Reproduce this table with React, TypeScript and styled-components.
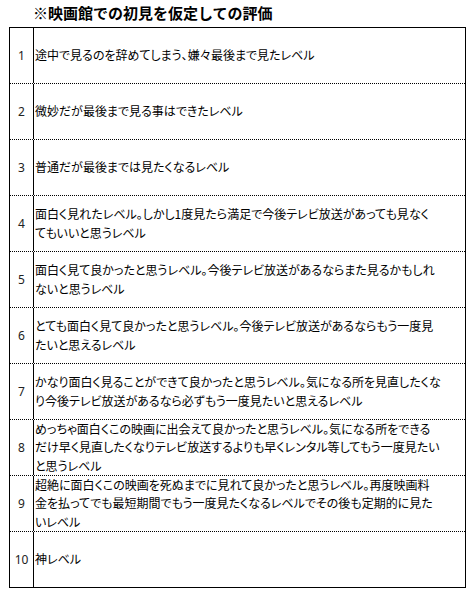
import React from "react";
import styled, { createGlobalStyle } from "styled-components";

const GlobalStyle = createGlobalStyle`
  html, body {
    margin: 0;
    padding: 0;
    background: #ffffff;
  }
  body {
    font-family: "Noto Sans CJK JP", "Noto Sans", sans-serif;
    color: #000000;
  }
`;

const Page = styled.div`
  width: 475px;
  height: 592px;
  background: #ffffff;
  box-sizing: border-box;
  padding-left: 9px;
`;

const Title = styled.h1`
  margin: 0;
  height: 27px;
  padding-left: 24px;
  box-sizing: border-box;
  font-family: "Noto Sans CJK JP", sans-serif;
  font-size: 15px;
  font-weight: 700;
  line-height: 26px;
  color: #000;
  white-space: nowrap;
`;

const Table = styled.div`
  width: 457px;
  box-sizing: border-box;
  border: 1px solid #000;
  display: flex;
  flex-direction: column;
`;

const Row = styled.div<{ $last?: boolean }>`
  display: grid;
  grid-template-columns: 24px 1fr;
  height: 56px;
  box-sizing: border-box;
  border-bottom: ${(p) => (p.$last ? "none" : "1px dotted #000")};
  ${(p) => (p.$last ? "height: 55px;" : "")}
`;

const NumCell = styled.div`
  border-right: 1px solid #000;
  display: flex;
  align-items: center;
  justify-content: center;
  font-family: "Noto Sans", "DejaVu Sans", sans-serif;
  font-size: 12px;
  color: #222;
`;

const TextCell = styled.div`
  display: flex;
  flex-direction: column;
  justify-content: center;
  padding-left: 1px;
  font-family: "Noto Sans CJK JP", sans-serif;
  font-feature-settings: "palt";
  font-size: 12px;
  line-height: 18.5px;
  color: #000;
  overflow: hidden;
`;

const Line = styled.span`
  white-space: nowrap;
`;

const rows: string[][] = [
  ["途中で見るのを辞めてしまう、嫌々最後まで見たレベル"],
  ["微妙だが最後まで見る事はできたレベル"],
  ["普通だが最後までは見たくなるレベル"],
  [
    "面白く見れたレベル。しかし1度見たら満足で今後テレビ放送があっても見なく",
    "てもいいと思うレベル",
  ],
  [
    "面白く見て良かったと思うレベル。今後テレビ放送があるならまた見るかもしれ",
    "ないと思うレベル",
  ],
  [
    "とても面白く見て良かったと思うレベル。今後テレビ放送があるならもう一度見",
    "たいと思えるレベル",
  ],
  [
    "かなり面白く見ることができて良かったと思うレベル。気になる所を見直したくな",
    "り今後テレビ放送があるなら必ずもう一度見たいと思えるレベル",
  ],
  [
    "めっちゃ面白くこの映画に出会えて良かったと思うレベル。気になる所をできる",
    "だけ早く見直したくなりテレビ放送するよりも早くレンタル等してもう一度見たい",
    "と思うレベル",
  ],
  [
    "超絶に面白くこの映画を死ぬまでに見れて良かったと思うレベル。再度映画料",
    "金を払ってでも最短期間でもう一度見たくなるレベルでその後も定期的に見た",
    "いレベル",
  ],
  ["神レベル"],
];

export default function App() {
  return (
    <>
      <GlobalStyle />
      <Page>
        <Title>※映画館での初見を仮定しての評価</Title>
        <Table>
          {rows.map((lines, i) => (
            <Row key={i} $last={i === rows.length - 1}>
              <NumCell>{i + 1}</NumCell>
              <TextCell>
                {lines.map((l, j) => (
                  <Line key={j}>{l}</Line>
                ))}
              </TextCell>
            </Row>
          ))}
        </Table>
      </Page>
    </>
  );
}
